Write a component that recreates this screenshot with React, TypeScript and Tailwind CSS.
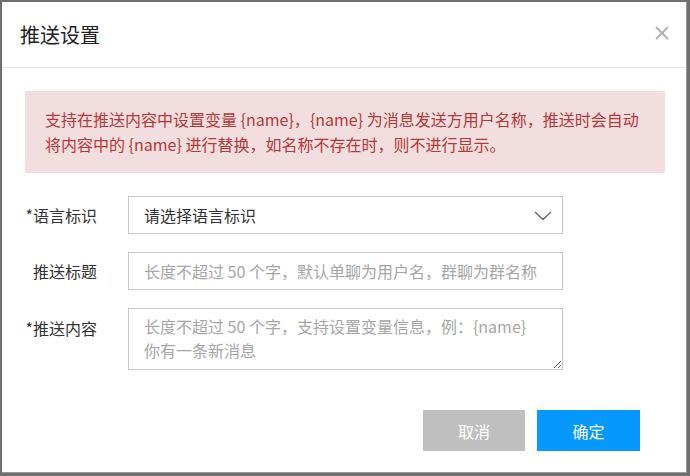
import { X } from "lucide-react";

const font = {
  fontFamily: '"Noto Sans CJK SC", "Noto Sans", sans-serif',
};

export default function App() {
  return (
    <div
      className="w-[690px] h-[476px] bg-[#6f6f6f] pt-[2px] pl-[2px] overflow-hidden"
      style={font}
    >
      <div className="w-[685px] h-[471px] bg-white border-r border-b border-[#9a9a9a] flex flex-col">
        {/* header */}
        <div className="h-[66px] flex items-center justify-between pl-[18px] pr-[13px] border-b border-[#e6e6e6] shrink-0">
          <h2 className="text-[20px] text-[#222] leading-none">推送设置</h2>
          <button className="text-[#b0b0b0] -mt-[4px]" aria-label="关闭">
            <X className="w-[22px] h-[22px]" strokeWidth={2} />
          </button>
        </div>

        <div className="pl-[23px] pr-[21px] pt-[23px]">
          {/* alert */}
          <div className="bg-[#f2dede] text-[#b23a38] text-[16px] leading-[25px] pl-[20px] pr-[10px] py-[16px]">
            支持在推送内容中设置变量 {"{name}"}，{"{name}"} 为消息发送方用户名称，推送时会自动
            <br />
            将内容中的 {"{name}"} 进行替换，如名称不存在时，则不进行显示。
          </div>

          {/* form */}
          <div className="mt-[23px] flex flex-col gap-[18px] text-[16px]">
            <div className="flex items-center">
              <label className="w-[72px] text-right text-[#333] whitespace-nowrap">*语言标识</label>
              <div className="ml-[31px] w-[435px] h-[38px] border border-[#c9c9c9] flex items-center justify-between pl-[15px] pr-[10px] text-[#333]">
                <span>请选择语言标识</span>
                <svg width="18" height="10" viewBox="0 0 18 10" fill="none" className="mt-[2px]">
                  <path d="M1 1l8 7.5L17 1" stroke="#666" strokeWidth="1.3" />
                </svg>
              </div>
            </div>

            <div className="flex items-center">
              <label className="w-[72px] text-right text-[#333] whitespace-nowrap">推送标题</label>
              <input
                className="ml-[31px] w-[435px] h-[38px] border border-[#c9c9c9] px-[15px] outline-none text-[#333] placeholder:text-[#a6a6a6]"
                placeholder="长度不超过 50 个字，默认单聊为用户名，群聊为群名称"
              />
            </div>

            <div className="flex items-start">
              <label className="w-[72px] text-right text-[#333] whitespace-nowrap mt-[8px]">*推送内容</label>
              <textarea
                className="ml-[31px] w-[435px] h-[62px] border border-[#c9c9c9] px-[15px] py-[5px] leading-[24px] outline-none text-[#333] placeholder:text-[#a6a6a6] resize-y"
                placeholder={"长度不超过 50 个字，支持设置变量信息，例：{name}\n你有一条新消息"}
              />
            </div>
          </div>

          {/* footer */}
          <div className="mt-[40px] flex justify-end gap-[12px] pr-[25px]">
            <button className="w-[102px] h-[41px] bg-[#bfbfbf] text-white text-[16px]">取消</button>
            <button className="w-[103px] h-[41px] bg-[#0798fd] text-white text-[16px]">确定</button>
          </div>
        </div>
      </div>
    </div>
  );
}
